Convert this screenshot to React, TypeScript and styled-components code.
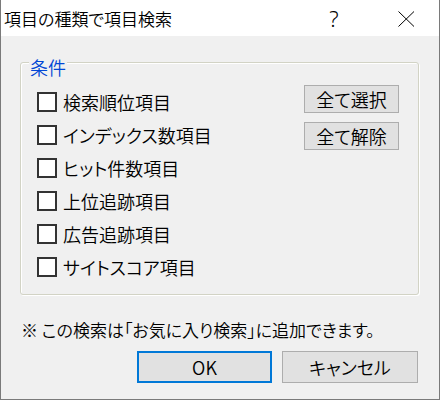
import React from "react";
import styled, { createGlobalStyle } from "styled-components";

const GlobalStyle = createGlobalStyle`
  html, body { margin: 0; padding: 0; background: #f0f0f0; }
  * { box-sizing: border-box; }
  body {
    font-family: "Noto Sans CJK JP", "Noto Sans", sans-serif;
    font-feature-settings: "palt";
    font-weight: 350;
    color: #000;
  }
`;

const Window = styled.div`
  width: 440px;
  height: 400px;
  display: flex;
  flex-direction: column;
  background: #f0f0f0;
  border-left: 1px solid #7a7a7a;
  border-right: 1px solid #7a7a7a;
  border-bottom: 1px solid #7a7a7a;
`;

const TitleBar = styled.div`
  height: 36px;
  flex: none;
  background: #fff;
  display: flex;
  align-items: center;
  padding-left: 3px;
`;

const Title = styled.div`
  flex: 1;
  font-size: 17px;
  line-height: 24px;
  margin-top: 1px;
`;

const HelpGlyph = styled.div`
  width: 20px;
  text-align: center;
  font-family: "Noto Sans", sans-serif;
  font-size: 22px;
  font-weight: 300;
  line-height: 24px;
  margin-right: 50px;
`;

const CloseButton = styled.div`
  width: 24px;
  display: flex;
  justify-content: center;
  margin-right: 21px;
  margin-top: 1px;
`;

const Body = styled.div`
  flex: 1;
  display: flex;
  flex-direction: column;
  padding: 26px 20px 0 19px;
`;

const GroupBox = styled.div`
  position: relative;
  height: 233px;
  border: 1px solid #d2d3c5;
  border-radius: 3px;
  box-shadow: 1px 1px 0 #ffffff, inset 1px 1px 0 #ffffff;
  display: flex;
  padding: 22px 19px 0 16px;
`;

const Legend = styled.div`
  position: absolute;
  left: 8px;
  top: -6px;
  padding: 0 1px;
  background: #f0f0f0;
  color: #0046d5;
  font-size: 18px;
  line-height: 20px;
`;

const CheckList = styled.div`
  flex: 1;
  display: flex;
  flex-direction: column;
`;

const CheckRow = styled.label`
  height: 33px;
  display: flex;
  align-items: center;
  gap: 6px;
  font-size: 18px;
  line-height: 24px;
`;

const CheckBox = styled.input.attrs({ type: "checkbox" })`
  appearance: none;
  width: 20px;
  height: 20px;
  margin: 0;
  background: #fff;
  border: 2px solid #333;
  flex: none;
`;

const SideButtons = styled.div`
  display: flex;
  flex-direction: column;
  gap: 9px;
`;

const Button = styled.button<{ $primary?: boolean; $w: number; $h: number }>`
  width: ${(p) => p.$w}px;
  height: ${(p) => p.$h}px;
  background: #e1e1e1;
  border: ${(p) => (p.$primary ? "2px solid #0078d7" : "1px solid #adadad")};
  font-family: "Noto Sans CJK JP", "Noto Sans", sans-serif;
  font-feature-settings: "palt";
  font-weight: 350;
  font-size: 18px;
  line-height: 24px;
  color: #000;
  padding: 0;
  display: flex;
  align-items: center;
  justify-content: center;
`;

const Note = styled.div`
  margin-top: 23px;
  padding-left: 1px;
  font-size: 17px;
  line-height: 24px;
`;

const Footer = styled.div`
  margin-top: 9px;
  display: flex;
  justify-content: flex-end;
  gap: 10px;
  padding-right: 1px;
`;

const items = [
  "検索順位項目",
  "インデックス数項目",
  "ヒット件数項目",
  "上位追跡項目",
  "広告追跡項目",
  "サイトスコア項目",
];

export default function App() {
  return (
    <>
      <GlobalStyle />
      <Window>
        <TitleBar>
          <Title>項目の種類で項目検索</Title>
          <HelpGlyph>?</HelpGlyph>
          <CloseButton>
            <svg width="17" height="16" viewBox="0 0 17 16">
              <path d="M0.5 0.5 L16 15.5 M16 0.5 L0.5 15.5" stroke="#000" strokeWidth="1" fill="none" />
            </svg>
          </CloseButton>
        </TitleBar>
        <Body>
          <GroupBox>
            <Legend>条件</Legend>
            <CheckList>
              {items.map((t) => (
                <CheckRow key={t}>
                  <CheckBox />
                  {t}
                </CheckRow>
              ))}
            </CheckList>
            <SideButtons>
              <Button $w={95} $h={28}>全て選択</Button>
              <Button $w={95} $h={28}>全て解除</Button>
            </SideButtons>
          </GroupBox>
          <Note>※ この検索は「お気に入り検索」に追加できます。</Note>
          <Footer>
            <Button $primary $w={135} $h={32}>OK</Button>
            <Button $w={136} $h={32}>キャンセル</Button>
          </Footer>
        </Body>
      </Window>
    </>
  );
}
